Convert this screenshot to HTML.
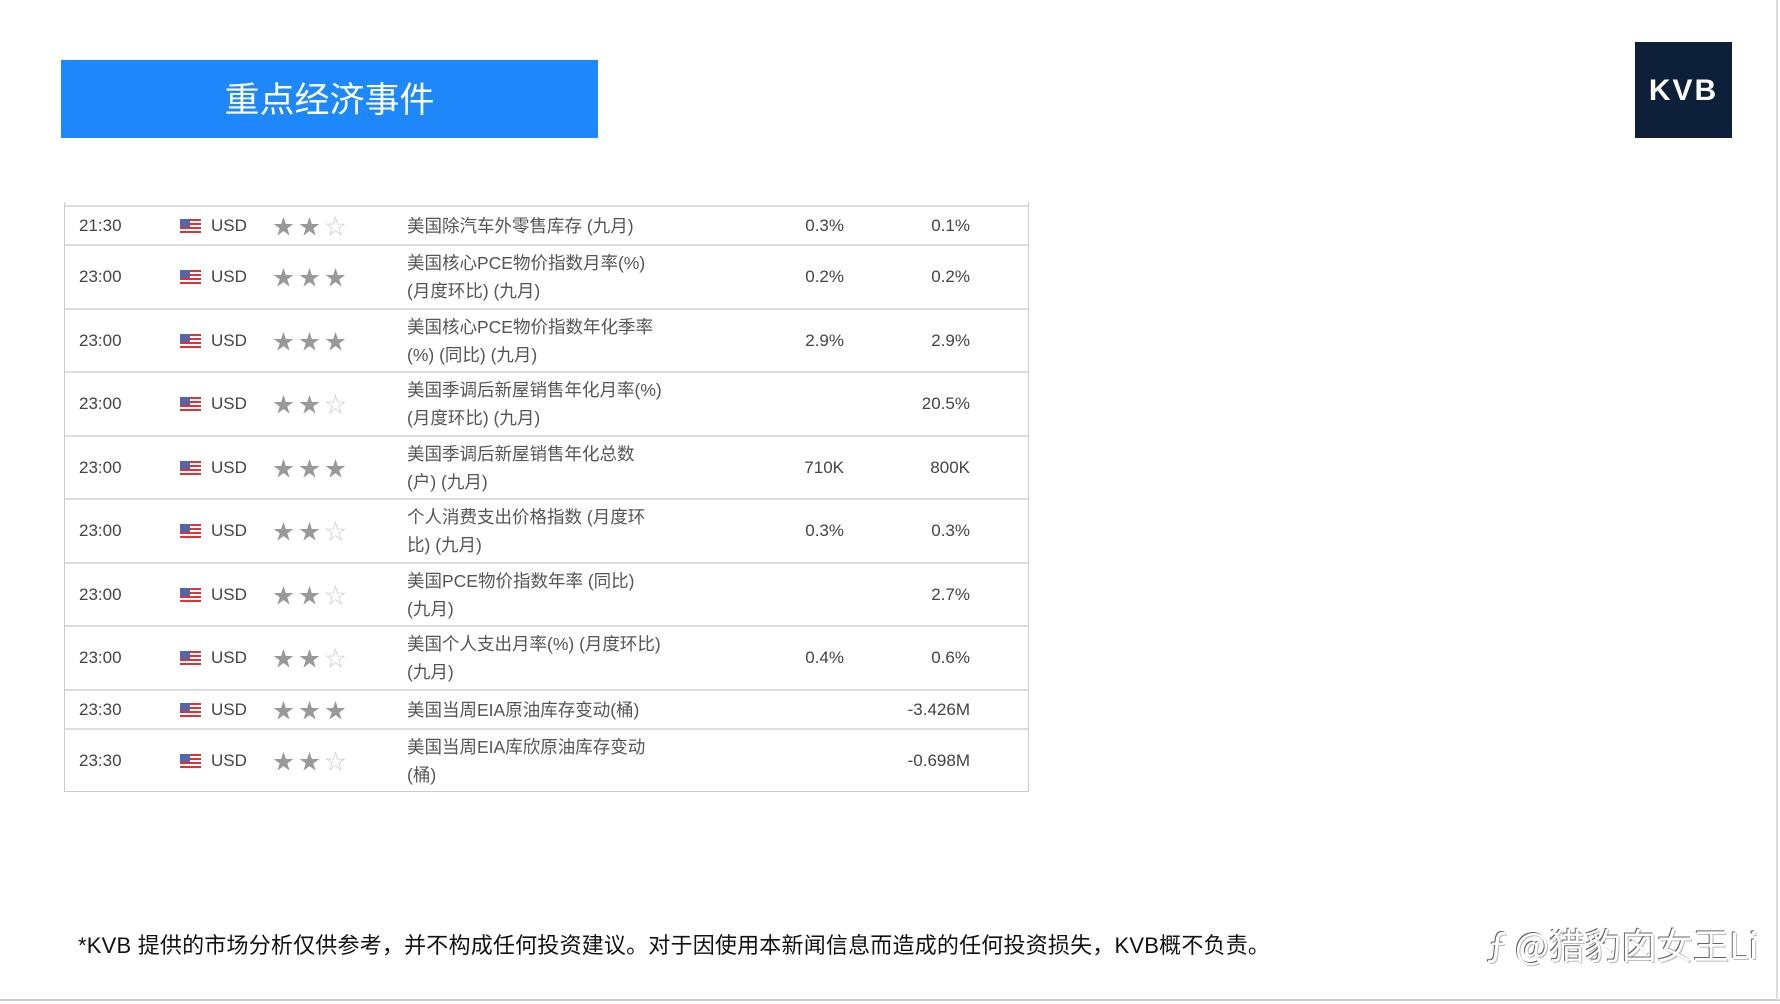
<!DOCTYPE html>
<html><head><meta charset="utf-8"><style>
*{margin:0;padding:0;box-sizing:border-box}
body{width:1780px;height:1004px;background:#fff;position:relative;overflow:hidden;font-family:"Liberation Sans","Noto Sans CJK SC",sans-serif;color:#333}
.title{position:absolute;left:61px;top:60px;width:537px;height:78px;background:#1e88fb;color:#fff;font-size:35px;text-align:center;line-height:82px}
.kvb{position:absolute;left:1635px;top:42px;width:97px;height:96px;background:#0e1f3a;color:#fff;font-size:30px;font-weight:bold;text-align:center;line-height:98px;letter-spacing:2px}
.tbl{position:absolute;left:64px;top:202px;width:965px;height:590px;border:1px solid #ccc;border-top:none}
.row{position:absolute;left:0;width:963px;border-top:2px solid #ddd;font-size:17px;color:#444}
.row div{position:absolute;top:50%;transform:translateY(-50%);white-space:nowrap}
.t{left:14px}.fl{left:115px;width:21px;height:14px;background:repeating-linear-gradient(#d33 0 2px,#fff 2px 4px)}
.fl:before{content:"";position:absolute;left:0;top:0;width:10px;height:8px;background:#5565a8}
.u{left:146px}.s{left:208px;color:#999;font-size:21px;letter-spacing:5px}.s i{font-style:normal;color:#ccc}
.e{left:342px;line-height:28px;color:#555;font-size:17.5px}.f{right:184px}.p{right:58px}
.foot{position:absolute;left:78px;top:928px;font-size:22px;color:#111;letter-spacing:0.2px}
.wm{position:absolute;left:1487px;top:918px;font-size:36px;color:#fff;text-shadow:-1px -1px 0 #666,1px 1px 0 #bbb;font-family:"Noto Sans CJK SC",sans-serif}
.bl{position:absolute;left:0;top:999px;width:1780px;height:2px;background:#ccc}
.rl{position:absolute;left:1776px;top:0;width:2px;height:1000px;background:#ddd}
</style></head><body>
<div class="title">重点经济事件</div>
<div class="kvb">KVB</div>
<div class="tbl">
<div class="row" style="top:3px;height:39px"><div class="t">21:30</div><div class="fl"></div><div class="u">USD</div><div class="s">★★<i>☆</i></div><div class="e">美国除汽车外零售库存 (九月)</div><div class="f">0.3%</div><div class="p">0.1%</div></div>
<div class="row" style="top:42px;height:64px"><div class="t">23:00</div><div class="fl"></div><div class="u">USD</div><div class="s">★★★</div><div class="e">美国核心PCE物价指数月率(%)<br>(月度环比) (九月)</div><div class="f">0.2%</div><div class="p">0.2%</div></div>
<div class="row" style="top:106px;height:63px"><div class="t">23:00</div><div class="fl"></div><div class="u">USD</div><div class="s">★★★</div><div class="e">美国核心PCE物价指数年化季率<br>(%) (同比) (九月)</div><div class="f">2.9%</div><div class="p">2.9%</div></div>
<div class="row" style="top:169px;height:64px"><div class="t">23:00</div><div class="fl"></div><div class="u">USD</div><div class="s">★★<i>☆</i></div><div class="e">美国季调后新屋销售年化月率(%)<br>(月度环比) (九月)</div><div class="p">20.5%</div></div>
<div class="row" style="top:233px;height:63px"><div class="t">23:00</div><div class="fl"></div><div class="u">USD</div><div class="s">★★★</div><div class="e">美国季调后新屋销售年化总数<br>(户) (九月)</div><div class="f">710K</div><div class="p">800K</div></div>
<div class="row" style="top:296px;height:64px"><div class="t">23:00</div><div class="fl"></div><div class="u">USD</div><div class="s">★★<i>☆</i></div><div class="e">个人消费支出价格指数 (月度环<br>比) (九月)</div><div class="f">0.3%</div><div class="p">0.3%</div></div>
<div class="row" style="top:360px;height:63px"><div class="t">23:00</div><div class="fl"></div><div class="u">USD</div><div class="s">★★<i>☆</i></div><div class="e">美国PCE物价指数年率 (同比)<br>(九月)</div><div class="p">2.7%</div></div>
<div class="row" style="top:423px;height:64px"><div class="t">23:00</div><div class="fl"></div><div class="u">USD</div><div class="s">★★<i>☆</i></div><div class="e">美国个人支出月率(%) (月度环比)<br>(九月)</div><div class="f">0.4%</div><div class="p">0.6%</div></div>
<div class="row" style="top:487px;height:39px"><div class="t">23:30</div><div class="fl"></div><div class="u">USD</div><div class="s">★★★</div><div class="e">美国当周EIA原油库存变动(桶)</div><div class="p">-3.426M</div></div>
<div class="row" style="top:526px;height:64px"><div class="t">23:30</div><div class="fl"></div><div class="u">USD</div><div class="s">★★<i>☆</i></div><div class="e">美国当周EIA库欣原油库存变动<br>(桶)</div><div class="p">-0.698M</div></div>
</div>
<div class="foot">*KVB 提供的市场分析仅供参考，并不构成任何投资建议。对于因使用本新闻信息而造成的任何投资损失，KVB概不负责。</div>
<div class="wm">ƒ @猎豹囟女王Li</div>
<div class="bl"></div><div class="rl"></div>
</body></html>
